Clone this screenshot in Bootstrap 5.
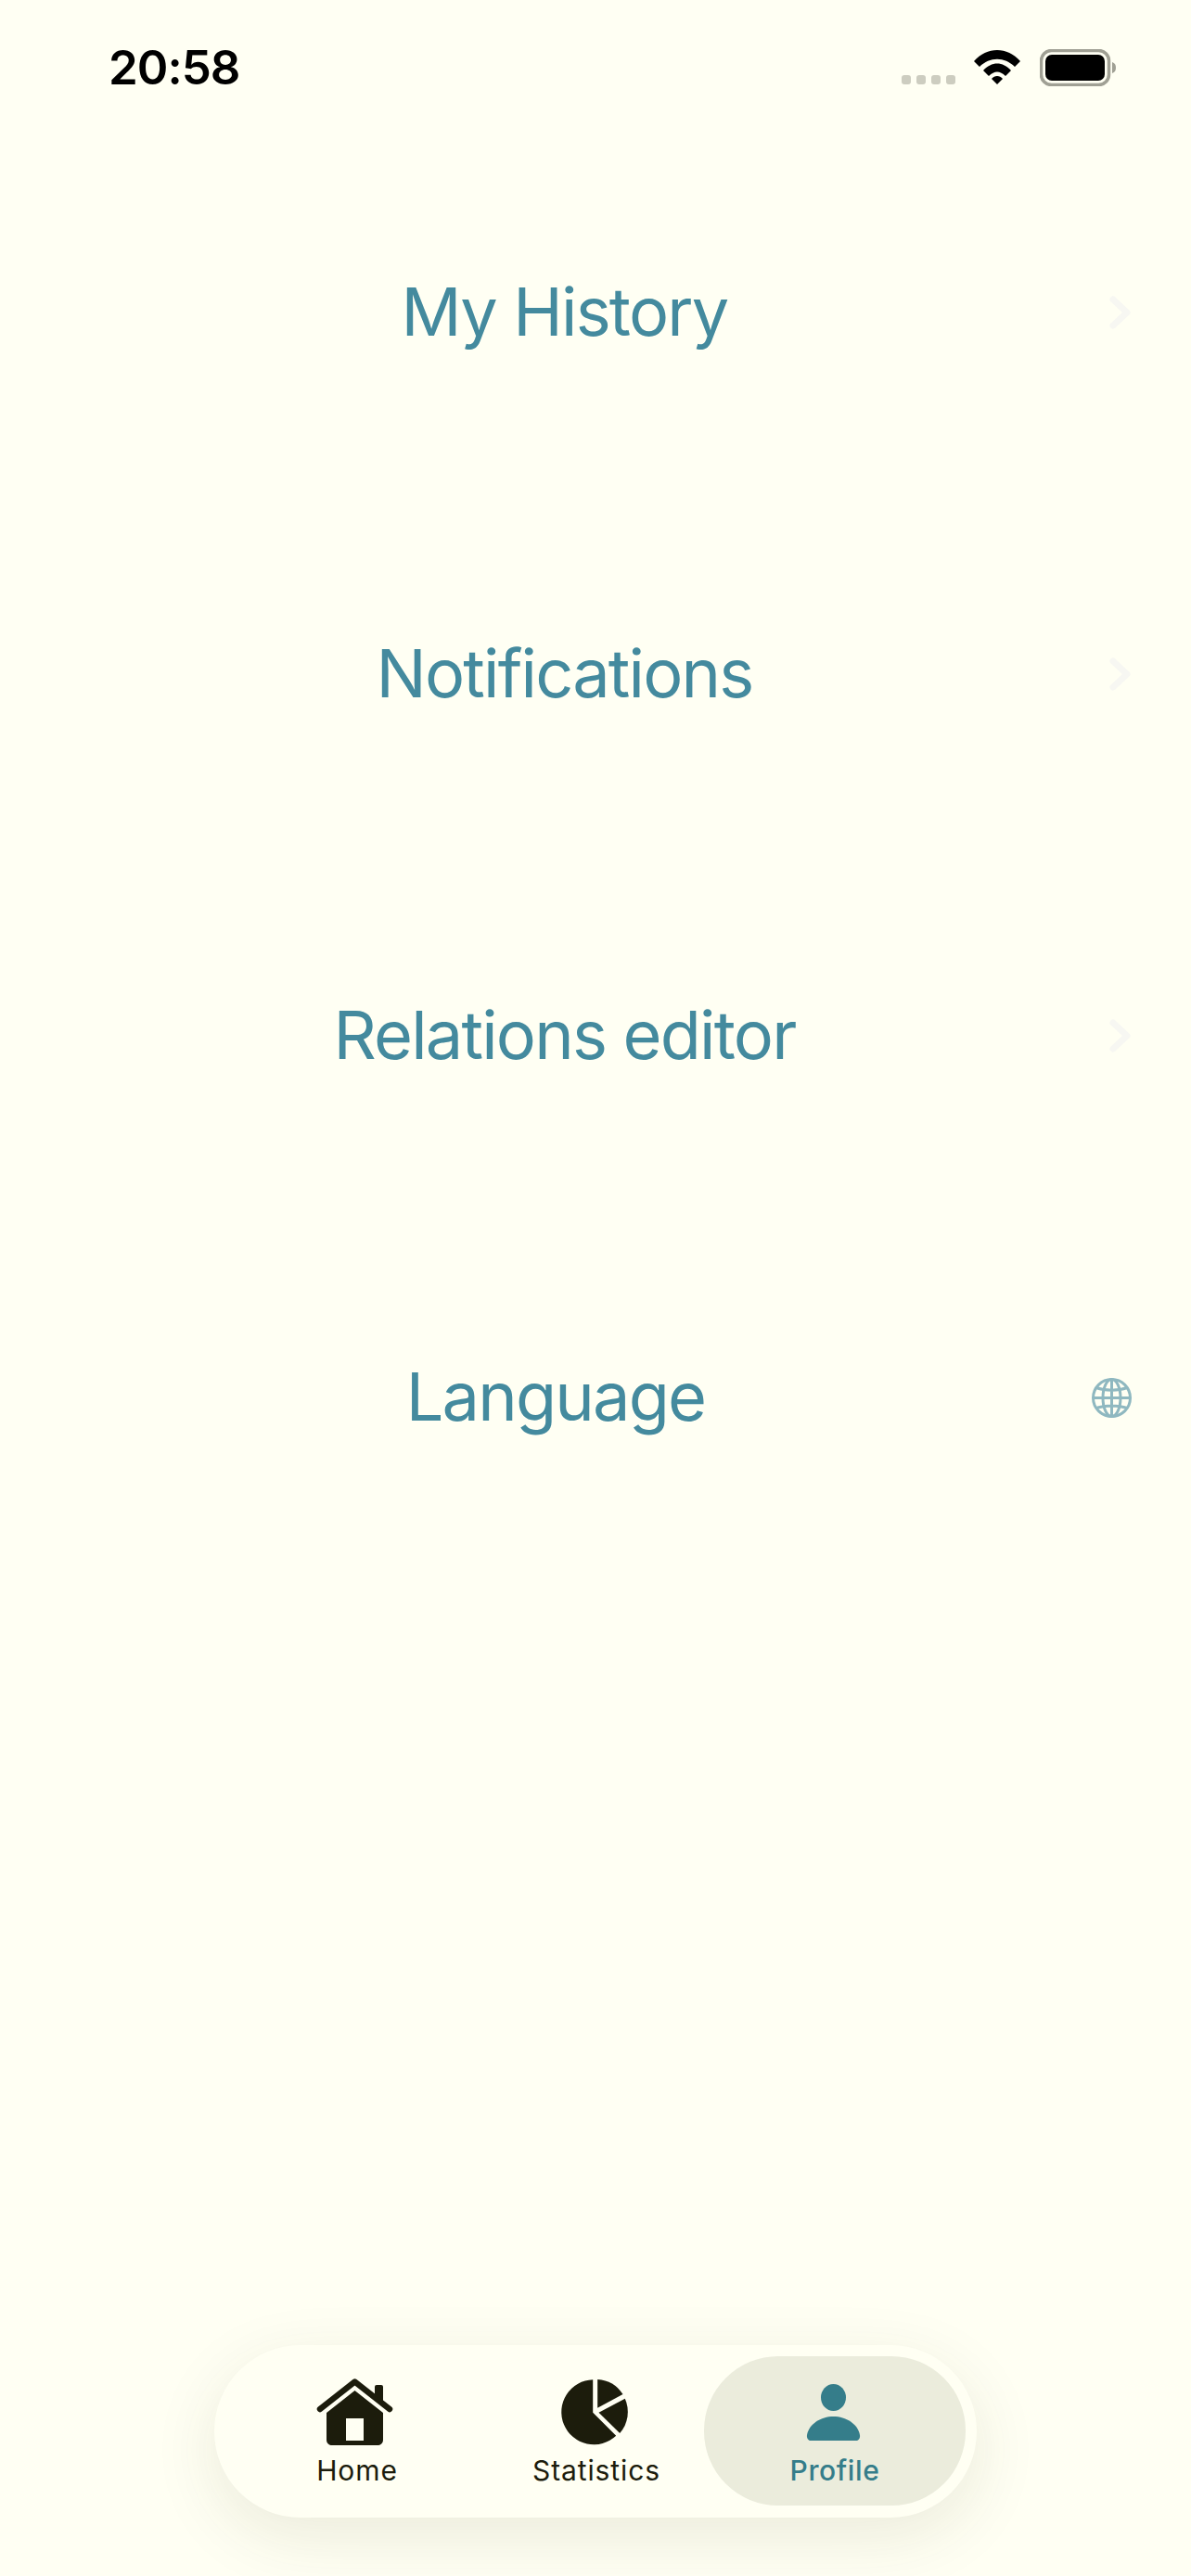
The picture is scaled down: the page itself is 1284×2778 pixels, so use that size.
<!DOCTYPE html>
<html lang="en">

<head>
    <meta charset="UTF-8">
    <meta name="viewport" content="width=device-width, initial-scale=1.0">
    <title>Profile</title>
    <link href="https://cdn.jsdelivr.net/npm/bootstrap@5.3.0/dist/css/bootstrap.min.css" rel="stylesheet">
    <script src="https://cdn.jsdelivr.net/npm/bootstrap@5.3.0/dist/js/bootstrap.bundle.min.js"></script>
    <style>
        html, body { background: #fffff3; }
        .phone { width: 1284px; height: 2778px; overflow: hidden; position: relative; background: #fffff3; }

        /* status bar */
        .status-bar { height: 142px; padding: 46px 80px 0 117px; }
        .clock { font: 600 51px/54px Inter, sans-serif; color: #000; letter-spacing: -1px; }
        .signal-dots { gap: 6px; margin-top: 35px; margin-right: 20px; }
        .signal-dots i { display: block; width: 10px; height: 10px; border-radius: 3px; background: #cdcdc0; }
        .wifi-icon { width: 50px; height: 38px; margin-right: 21px; margin-top: 7px; }
        .batt-icon { width: 83px; height: 40px; margin-top: 7px; }

        /* menu */
        .menu-row { height: 390px; padding: 0 64px 0 21px; }
        .menu-label { font: 400 72px/1 Inter, sans-serif; color: #448a9e; letter-spacing: -1.8px; padding-bottom: 3px; }
        .chev-icon { width: 24px; height: 40px; }
        .globe-icon { width: 43px; height: 43px; }

        /* bottom tabs */
        .tab-dock { position: absolute; left: 231px; top: 2529px; width: 822px; height: 186px; border-radius: 93px; background: #fffff3; box-shadow: 0 20px 70px rgba(60, 60, 20, .10); padding: 12px 12px 13px 12px; }
        .tab-item { height: 161px; border-radius: 80px; font: 400 30px/36px Inter, sans-serif; letter-spacing: .9px; color: #1c1c0c; padding-top: 23px; }
        .tab-home { width: 284px; }
        .tab-stats { width: 232px; }
        .tab-profile { width: 282px; background: #ebecdc; color: #357d8a; font-weight: 500; letter-spacing: .6px; }
        .tab-svg { width: 84px; height: 74px; display: block; margin-bottom: 8px; overflow: visible; }
    </style>
</head>

<body class="m-0">
    <div class="phone">
        <div class="status-bar d-flex justify-content-between align-items-start">
            <div class="clock">20:58</div>
            <div class="d-flex align-items-start">
                <div class="signal-dots d-flex"><i></i><i></i><i></i><i></i></div>
                <svg class="wifi-icon" viewBox="0 0 50 38">
                    <path d="M0 13 C14 -3 36 -3 50 13 L44 19 C33 8 17 8 6 19 Z" fill="#000"/>
                    <path d="M10 23 C19 13 31 13 40 23 L34 29 C28 23 22 23 16 29 Z" fill="#000"/>
                    <path d="M19 32 C22 28 28 28 31 32 L25 38 Z" fill="#000"/>
                </svg>
                <svg class="batt-icon" viewBox="0 0 83 40">
                    <rect x="1.5" y="1.5" width="73" height="37" rx="11" fill="none" stroke="#a0a094" stroke-width="3.5"/>
                    <rect x="6" y="6" width="64" height="28" rx="7" fill="#000"/>
                    <path d="M78 14 C81 15 82 17 82 20 C82 23 81 25 78 26 Z" fill="#a0a094"/>
                </svg>
            </div>
        </div>

        <div class="menu-row d-flex align-items-center">
            <div class="menu-label flex-grow-1 text-center">My History</div>
            <svg class="chev-icon" viewBox="0 0 24 40"><path d="M4 6 L19 20 L4 34" fill="none" stroke="#f7f7f2" stroke-width="7" stroke-linecap="round" stroke-linejoin="round"/></svg>
        </div>
        <div class="menu-row d-flex align-items-center">
            <div class="menu-label flex-grow-1 text-center">Notifications</div>
            <svg class="chev-icon" viewBox="0 0 24 40"><path d="M4 6 L19 20 L4 34" fill="none" stroke="#f7f7f2" stroke-width="7" stroke-linecap="round" stroke-linejoin="round"/></svg>
        </div>
        <div class="menu-row d-flex align-items-center">
            <div class="menu-label flex-grow-1 text-center">Relations editor</div>
            <svg class="chev-icon" viewBox="0 0 24 40"><path d="M4 6 L19 20 L4 34" fill="none" stroke="#f7f7f2" stroke-width="7" stroke-linecap="round" stroke-linejoin="round"/></svg>
        </div>
        <div class="menu-row d-flex align-items-center">
            <div class="menu-label flex-grow-1 text-center">Language</div>
            <svg class="globe-icon" viewBox="0 0 43 43" fill="none" stroke="#8fb8c0" stroke-width="3">
                <circle cx="21.5" cy="21.5" r="20"/>
                <ellipse cx="21.5" cy="21.5" rx="9.5" ry="20"/>
                <path d="M21.5 1.5 V41.5 M1.5 21.5 H41.5 M5 10.5 C14 14 29 14 38 10.5 M5 32.5 C14 29 29 29 38 32.5"/>
            </svg>
        </div>

        <div class="tab-dock d-flex">
            <div class="tab-item tab-home d-flex flex-column align-items-center">
                <svg class="tab-svg" viewBox="0 0 84 74">
                    <path d="M2 34 L39.5 4.5 L77 34" fill="none" stroke="#1c1c0c" stroke-width="6.5" stroke-linecap="round" stroke-linejoin="round"/>
                    <path d="M61 20 V10 Q61 8 63 8 H68 Q70 8 70 10 V27 Z" fill="#1c1c0c"/>
                    <path fill-rule="evenodd" d="M39.5 14 L70 38 V67 C70 71 67 73 64 73 H15 C12 73 9 71 9 67 V38 Z M30 44 V68 H49 V44 Z" fill="#1c1c0c"/>
                </svg>
                <div>Home</div>
            </div>
            <div class="tab-item tab-stats d-flex flex-column align-items-center">
                <svg class="tab-svg" viewBox="-1.5 0 84 74">
                    <path d="M36.7 2.2 V37.7 L61.7 62.7 A35 35 0 1 1 36.7 2.2 Z" fill="#1c1c0c"/>
                    <path d="M41.7 2 A35 35 0 0 1 69 18 L41.7 32.7 Z" fill="#1c1c0c"/>
                    <path d="M43 37.7 L71.3 22.7 A35 35 0 0 1 65.7 60 Z" fill="#1c1c0c"/>
                </svg>
                <div>Statistics</div>
            </div>
            <div class="tab-item tab-profile d-flex flex-column align-items-center">
                <svg class="tab-svg" viewBox="0 0 84 74">
                    <ellipse cx="40.5" cy="21.5" rx="13.5" ry="14.5" fill="#357d8a"/>
                    <path d="M12 62 C14 50 27 42 40.5 42 C54 42 67 50 69 62 C69.5 66 67 68 65 68 H16 C14 68 11.5 66 12 62 Z" fill="#357d8a"/>
                </svg>
                <div>Profile</div>
            </div>
        </div>
    </div>
</body>

</html>
